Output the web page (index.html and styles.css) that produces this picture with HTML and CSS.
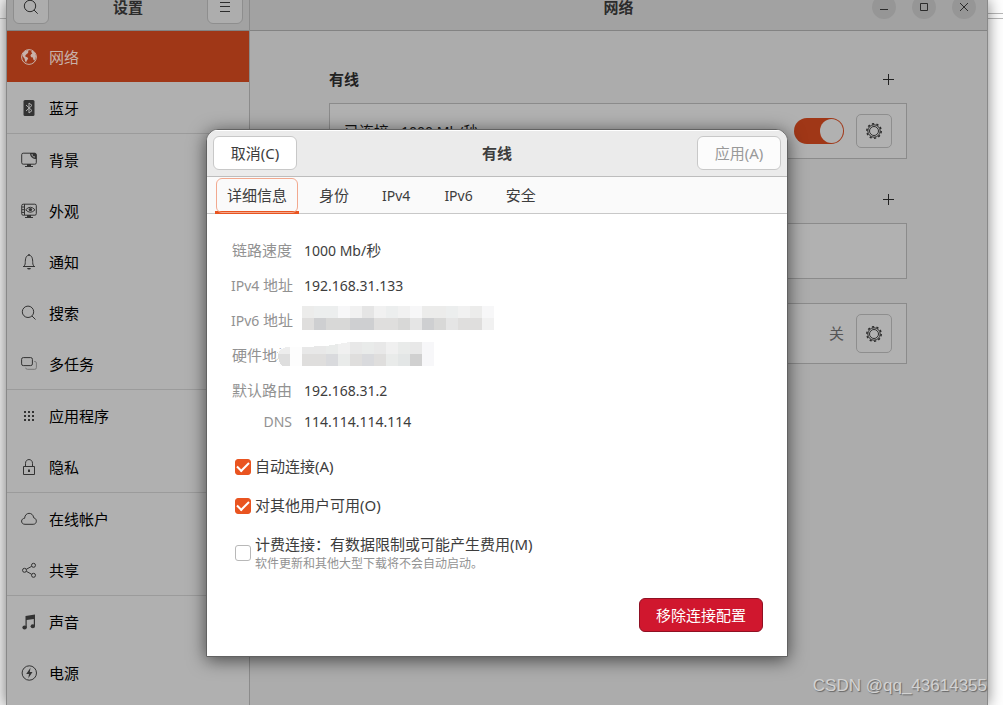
FILE: index.html
```html
<!DOCTYPE html>
<html lang="zh-CN">
<head>
<meta charset="utf-8">
<title>设置</title>
<link rel="stylesheet" href="styles.css">
</head>
<body>
<div class="window">
  <aside class="sidebar">
    <header class="bar side-bar">
      <button class="bar-btn" aria-label="搜索"><svg class="icon" viewBox="0 0 16 16"><circle cx="7" cy="7" r="5.7"/><path d="M11 11l3.7 3.7"/></svg></button>
      <h1 class="title">设置</h1>
      <button class="bar-btn" aria-label="菜单"><svg class="icon" viewBox="0 0 16 16"><path d="M3 3.5h10M3 7.5h10M3 12.5h10"/></svg></button>
    </header>
    <nav class="nav">
      <a class="item selected" href="#"><svg class="icon" viewBox="0 0 16 16"><circle cx="8" cy="8" r="7.4"/><path class="fill" d="M1.500 4.500L4 2l3-1 .8.8-1 1.200.6.8-1.400 1-1.300 1.200-.6 1.300 1.400.6 1.700 1.200-.7 1.600-1 1.500-.3 1.600-1.200-1.800-.4-2.300L1.500 7zM10 2.500l1.500-.8L14 4l1 3-.6 3-1.200 1.700-1-1.500-.3-1.700-1.600-.3-.9-1.400.7-1.600 1.200-.7-.7-1z"/></svg>网络</a>
      <a class="item" href="#"><svg class="icon" viewBox="0 0 16 16"><rect class="fill" x="2.500" width="11" height="16" rx="1.500"/><path class="knock" d="M5 5l6 5.600L8 13V3l3 2.400L5 11"/></svg>蓝牙</a>
      <a class="item divided" href="#"><svg class="icon" viewBox="0 0 16 16"><rect x=".7" y="1.200" width="14.600" height="11" rx="1.500"/><path class="fill" d="M9 1h5l1.500 1.500V7C12 7 9 5 9 1zM6 12h4v2h2v1H4v-1h2z"/><path class="light" d="M11 2c0 2 1 3 3 3"/></svg>背景</a>
      <a class="item" href="#"><svg class="icon" viewBox="0 0 16 16"><rect x=".7" y="1.200" width="14.600" height="11" rx="1.500"/><path d="M3.500 1v11M1 4h2M1 6.700h2M1 9.400h2M4.700 6.800Q9.300 1.700 14 6.800 9.300 11.700 4.700 6.800z"/><circle class="fill" cx="9.400" cy="6.600" r="1.700"/><path class="fill" d="M6 12h4v2h2v1H4v-1h2z"/></svg>外观</a>
      <a class="item" href="#"><svg class="icon" viewBox="0 0 16 16"><path d="M2 12.500h12M3 12.300c1.400-1.500 1.200-3 1.300-5C4.500 3.500 5.500 1.300 8 1.300s3.500 2.200 3.700 6c.1 2-.1 3.500 1.300 5"/><path class="fill" d="M6 14h4q-.5 1.500-2 1.500T6 14zM7.300 0h1.400v1.500H7.300z"/></svg>通知</a>
      <a class="item" href="#"><svg class="icon" viewBox="0 0 16 16"><circle cx="7" cy="6.800" r="5.700"/><path d="M11 11l3.500 3.500"/></svg>搜索</a>
      <a class="item" href="#"><svg class="icon" viewBox="0 0 16 16"><rect x=".6" y="1.600" width="10.800" height="8" rx="1.700"/><path class="faint" d="M13 5.500h.7q1.700 0 1.700 1.500v4.700q0 1.600-1.700 1.600H6.500q-1.800 0-1.800-1.600"/></svg>多任务</a>
      <a class="item divided" href="#"><svg class="icon" viewBox="0 0 16 16"><path class="fill" d="M3 3h2v2H3zM7 3h2v2H7zM11 3h2v2h-2zM3 7h2v2H3zM7 7h2v2H7zM11 7h2v2h-2zM3 11h2v2H3zM7 11h2v2H7zM11 11h2v2h-2z"/></svg>应用程序</a>
      <a class="item" href="#"><svg class="icon" viewBox="0 0 16 16"><path d="M2.500 7.500h11v8h-11zM4.500 7V4.300c0-5 7-5 7 0V7"/><path class="fill" d="M7 10.500h2v2.500H7z"/></svg>隐私</a>
      <a class="item divided" href="#"><svg class="icon" viewBox="0 0 16 16"><path d="M4 13.300C-.5 13.300-.5 7.500 3.600 7.300 4 .7 12 .8 12.700 6.800c3.700.7 3.500 6.500-.5 6.500z"/></svg>在线帐户</a>
      <a class="item" href="#"><svg class="icon" viewBox="0 0 16 16"><circle cx="3.500" cy="8.300" r="2"/><circle cx="12.500" cy="3.300" r="2"/><circle cx="12.500" cy="13.300" r="2"/><path d="M5.300 7.300l5.400-3M5.300 9.300l5.400 3"/></svg>共享</a>
      <a class="item divided" href="#"><svg class="icon" viewBox="0 0 16 16"><path class="fill" d="M4.500 2L14 .5V12h-1.200V5L5.700 6v7.500H4.500z"/><ellipse class="fill" cx="3.600" cy="13.500" rx="2.200" ry="2"/><ellipse class="fill" cx="11.800" cy="12.300" rx="2.200" ry="2"/></svg>声音</a>
      <a class="item" href="#"><svg class="icon" viewBox="0 0 16 16"><circle cx="8.300" cy="8" r="7.200"/><path class="fill" d="M9.500 2.800L5.200 9H8l-.7 4.300L11.500 7H8.800z"/></svg>电源</a>
    </nav>
  </aside>
  <main class="main">
    <header class="bar main-bar">
      <h2 class="title">网络</h2>
      <div class="controls">
        <button class="round" aria-label="最小化"><svg class="icon" viewBox="0 0 16 16"><path d="M4 10.500h8"/></svg></button>
        <button class="round" aria-label="最大化"><svg class="icon" viewBox="0 0 16 16"><path d="M4.500 4.500h7v7h-7z"/></svg></button>
        <button class="round" aria-label="关闭"><svg class="icon" viewBox="0 0 16 16"><path d="M4 4l8 8M12 4l-8 8"/></svg></button>
      </div>
    </header>
    <div class="content">
      <div class="section-head"><h3 class="section-title">有线</h3><button class="add" aria-label="添加"><svg class="icon" viewBox="0 0 16 16"><path d="M8.500 3v11M3 8.500h11"/></svg></button></div>
      <div class="card">
        <span class="card-text">已连接 <span class="latin">- 1000 Mb/</span>秒</span>
        <input class="switch" type="checkbox" role="switch" aria-label="有线" checked>
        <button class="gear" aria-label="选项"><svg class="icon" viewBox="0 0 16 16"><circle cx="8" cy="8" r="6.200"/><circle cx="8" cy="8" r="4.500"/><circle class="teeth" cx="8" cy="8" r="7.200"/></svg></button>
      </div>
      <div class="section-head"><button class="add" aria-label="添加"><svg class="icon" viewBox="0 0 16 16"><path d="M8.500 3v11M3 8.500h11"/></svg></button></div>
      <div class="card last-of-group"></div>
      <div class="card proxy">
        <span class="state">关</span>
        <button class="gear" aria-label="选项"><svg class="icon" viewBox="0 0 16 16"><circle cx="8" cy="8" r="6.200"/><circle cx="8" cy="8" r="4.500"/><circle class="teeth" cx="8" cy="8" r="7.200"/></svg></button>
      </div>
    </div>
  </main>

  <dialog class="dialog" open aria-labelledby="dialog-title">
    <header class="dialog-bar">
      <button class="btn">取消(C)</button>
      <h2 class="title" id="dialog-title">有线</h2>
      <button class="btn" disabled>应用(A)</button>
    </header>
    <div class="tabs" role="tablist">
      <button class="tab active" role="tab" aria-selected="true">详细信息</button>
      <button class="tab" role="tab">身份</button>
      <button class="tab latin" role="tab">IPv4</button>
      <button class="tab latin" role="tab">IPv6</button>
      <button class="tab" role="tab">安全</button>
    </div>
    <div class="panel">
      <dl class="details">
        <dt>链路速度</dt><dd><span class="latin">1000 Mb/</span>秒</dd>
        <dt><span class="latin">IPv4 </span>地址</dt><dd class="latin">192.168.31.133</dd>
        <dt><span class="latin">IPv6 </span>地址</dt>
        <dd class="masked"><svg class="mosaic" width="192" height="24" viewBox="0 0 16 2" preserveAspectRatio="none" shape-rendering="crispEdges">
          <path fill="#ececeb" d="M0 0h1v1H0zM10 0h2v1h-2zM14 0h1v1h-1z"/><path fill="#eceeee" d="M1 0h2v1H1zM7 0h1v1H7zM12 0h1v1h-1z"/><path fill="#f7f7f8" d="M3 0h1v1H3zM9 0h1v1H9zM15 0h1v1h-1z"/><path fill="#f1f1f1" d="M4 0h1v1H4zM6 0h1v1H6zM8 0h1v1H8zM13 0h1v1h-1zM15 1h1v1h-1z"/><path fill="#e5e5e5" d="M5 0h1v1H5zM9 1h1v1H9zM12 1h1v1h-1z"/><path fill="#dfdedd" d="M0 1h1v1H0zM6 1h2v1H6zM13 1h2v1h-2z"/><path fill="#cecfd1" d="M1 1h1v1H1zM4 1h2v1H4zM10 1h1v1h-1z"/><path fill="#d8d8d7" d="M2 1h2v1H2zM8 1h1v1H8zM11 1h1v1h-1z"/>
        </svg></dd>
        <dt>硬件地址</dt>
        <dd class="masked"><svg class="mosaic wide" width="156" height="24" viewBox="0 0 156 24" shape-rendering="crispEdges">
          <path fill="#fdfdfd" d="M0 8l8-3h16v19H0z"/><path fill="#ededed" d="M0 12Q2 6 9 5h3v7z"/><path fill="#dedede" d="M0 12h12v12H4Q0 20 0 12z"/>
          <path fill="#e8e8e8" d="M24 5L48 4V12H24zM72 0h12v12H72zM96 0h12v12H96zM132 0h12v12h-12z"/><path fill="#e9ebea" d="M48 4l12-2v10H48zM84 0h12v12H84zM60 12h12v12H60zM108 12h12v12h-12zM120 0h12v12h-12z"/><path fill="#f0f0f0" d="M60 2l12-2v12H60zM108 0h12v12h-12z"/><path fill="#f7f7f9" d="M144 0h12v24h-12z"/><path fill="#dfdedd" d="M24 12h24v12H24zM72 12h12v12H72zM96 12h12v12H96z"/><path fill="#d9dadd" d="M48 12h12v12H48zM84 12h12v12H84z"/><path fill="#e3e6e6" d="M120 12h12v12h-12z"/><path fill="#d0d0d0" d="M132 12h12v12h-12z"/>
        </svg></dd>
        <dt>默认路由</dt><dd class="latin">192.168.31.2</dd>
        <dt class="latin short">DNS</dt><dd class="latin short">114.114.114.114</dd>
      </dl>
      <div class="checks">
        <label class="check"><input class="box" type="checkbox" checked><span>自动连接(A)</span></label>
        <label class="check"><input class="box" type="checkbox" checked><span>对其他用户可用(O)</span></label>
        <label class="check"><input class="box" type="checkbox"><span class="two-line">计费连接：有数据限制或可能产生费用(M)<small class="hint">软件更新和其他大型下载将不会自动启动。</small></span></label>
      </div>
      <button class="btn danger">移除连接配置</button>
    </div>
  </dialog>
  <p class="watermark">CSDN @qq_43614355</p>
</div>
</body>
</html>
```
FILE: styles.css
```css
* { box-sizing: border-box; }

body {
  margin: 0;
  height: 100vh;
  overflow: hidden;
  padding: 0 15px 0 6px;
  background:
    linear-gradient(#b8b8b8, #b8b8b8) right 13px / 16px 1px no-repeat,
    linear-gradient(#b8b8b8, #b8b8b8) left 18px / 100% 1px no-repeat,
    linear-gradient(#f1f1f1, #f1f1f1) left top / 16px 100% no-repeat,
    #fff;
  font: 15px/23px "Noto Sans", "Noto Sans CJK SC", sans-serif;
  color: #3d3d3d;
}

button {
  font: inherit;
  color: inherit;
  padding: 0;
  border: 0;
  background: none;
}

h1, h2, h3, p, dl, dd { margin: 0; }

.latin { font-size: 14px; }

.icon {
  display: block;
  flex: none;
  width: 16px;
  height: 16px;
  fill: none;
  stroke: currentColor;
  stroke-width: 1;
}
.icon .fill { fill: currentColor; stroke: none; }
.icon .knock { stroke: #b0b0b0; }
.icon .light { stroke: #b0b0b0; }
.icon .faint { stroke: #777; }
.icon .teeth { stroke-width: 1.500; stroke-dasharray: 2.200 2.324; }

/* settings window */
.window {
  position: relative;
  display: flex;
  height: 100%;
  border: solid #898989;
  border-width: 0 1px;
  box-shadow: 0 0 14px rgba(0, 0, 0, .5);
  background: #acacac;
}

.bar {
  display: flex;
  align-items: center;
  height: 47px;
  margin-top: -16px;
  border-bottom: 1px solid #838383;
  background: #a2a2a2;
  color: #2c2c2c;
}
.title { font-size: 15px; font-weight: 700; }

.sidebar {
  flex: none;
  width: 243px;
  border-right: 1px solid #8b8b8b;
  background: #b0b0b0;
}
.side-bar { justify-content: space-between; padding: 0 6px; }
.bar-btn {
  display: grid;
  place-items: center;
  width: 36px;
  height: 34px;
  border: 1px solid #8e8e8e;
  border-radius: 6px;
  background: #adadad;
}

.item {
  display: flex;
  align-items: center;
  gap: 12px;
  height: 51px;
  padding-left: 14px;
  line-height: 24px;
  color: #000;
  text-decoration: none;
}
.item .icon { color: #333; }
.item.divided {
  height: 52px;
  border-top: 1px solid #9b9b9b;
}
.item.selected, .item.selected .icon { color: #c8b2aa; }
.item.selected { background: #a03717; }

.main { flex: 1; min-width: 0; }
.main-bar {
  display: grid;
  grid-template-columns: 1fr auto 1fr;
}
.main-bar .title { grid-column: 2; }
.controls {
  display: flex;
  justify-content: flex-end;
  gap: 16px;
  padding-right: 11px;
}
.round {
  display: grid;
  place-items: center;
  width: 24px;
  height: 24px;
  border-radius: 50%;
  background: #969696;
}

.content { padding: 36px 80px 0 79px; }
.section-head {
  display: flex;
  align-items: center;
  height: 24px;
  margin-bottom: 12px;
  padding-right: 11px;
}
.section-title { font-size: 15px; color: #222; }
.add { margin-left: auto; color: #222; }
.card {
  display: flex;
  align-items: center;
  gap: 12px;
  height: 56px;
  margin-bottom: 28px;
  padding: 0 14px;
  border: 1px solid #8b8b8b;
  background: #b1b1b1;
}
.last-of-group { margin-bottom: 24px; }
.card-text { color: #111; margin-right: auto; }
.proxy { height: 61px; }
.state { margin-left: auto; color: #555; }
.gear {
  display: grid;
  place-items: center;
  width: 36px;
  height: 34px;
  border: 1px solid #8e8e8e;
  border-radius: 5px;
  color: #2c2c2c;
}
.proxy .gear { height: 39px; }
.switch {
  appearance: none;
  display: flex;
  justify-content: flex-end;
  width: 50px;
  height: 26px;
  margin: 0;
  padding: 1px;
  border-radius: 13px;
  background: #a03717;
}
.switch::after {
  content: "";
  width: 23px;
  height: 24px;
  border-radius: 50%;
  background: #b1b1b1;
}

/* connection dialog */
.dialog {
  position: absolute;
  top: 129px;
  left: 0;
  right: 0;
  width: 582px;
  max-width: 100%;
  margin: 0 auto;
  padding: 0;
  overflow: hidden;
  border: 1px solid #626262;
  border-radius: 12px 12px 0 0;
  background: #fff;
  color: #3d3d3d;
  box-shadow: 0 3px 18px rgba(0, 0, 0, .6);
}
.dialog-bar {
  display: flex;
  align-items: center;
  justify-content: space-between;
  height: 47px;
  padding: 0 6px;
  border-bottom: 1px solid #bdbdbd;
  background: #ebebeb;
  box-shadow: inset 0 1px #fff;
}
.btn {
  width: 84px;
  height: 34px;
  border: 1px solid #c8c8c8;
  border-radius: 6px;
  background: #fff;
}
.btn:disabled { background: #fcfcfc; color: #999; }

.tabs {
  display: flex;
  gap: 8px;
  height: 37px;
  padding: 0 8px;
  border-bottom: 1px solid #c8c8c8;
  background: #fafafa;
}
.tab {
  height: 37px;
  padding: 0 12px;
}
.tab.latin { padding: 0 13px; }
.tab.active {
  position: relative;
  border-bottom: 3px solid #e95420;
  padding-top: 3px;
}
.tab.active::after {
  content: "";
  position: absolute;
  inset: 1px 1px -2px;
  border: 1px solid #f2a98f;
  border-radius: 6px;
}

.panel {
  display: flex;
  flex-direction: column;
  gap: 25px;
  padding: 25px 24px 24px;
}
.details {
  display: grid;
  grid-template-columns: 61px 1fr;
  gap: 12px;
}
.details dt {
  text-align: right;
  white-space: nowrap;
  color: #929292;
}
.details .short { line-height: 16px; }
.masked { position: relative; }
.mosaic { position: absolute; top: -3px; left: -2px; }
.mosaic.wide { top: -2px; left: -26px; }

.checks {
  display: grid;
  gap: 16px;
  padding-left: 4px;
}
.check {
  display: flex;
  align-items: center;
  gap: 4px;
}
.two-line { line-height: 22px; }
.hint {
  display: block;
  font-size: 12px;
  line-height: 18px;
  color: #929292;
}
.box {
  appearance: none;
  display: grid;
  place-items: center;
  flex: none;
  width: 16px;
  height: 16px;
  margin: 0;
  border: 1px solid #b8b8b8;
  border-radius: 3px;
  background: #fff;
}
.box:checked { border-color: #e95420; background: #e95420; }
.box:checked::after {
  content: "";
  width: 10px;
  height: 5px;
  margin-bottom: 3px;
  border: solid #fff;
  border-width: 0 0 2px 2px;
  transform: rotate(-45deg);
}
.danger {
  align-self: flex-end;
  width: 124px;
  border-color: #8f1023;
  background: #d0172e;
  color: #fff;
}

.watermark {
  position: absolute;
  right: 0;
  bottom: 7px;
  font: 17px/24px "Liberation Sans", Arial, sans-serif;
  color: #d2d2d2;
  text-shadow: 1px 1px 1px #666;
}
```
